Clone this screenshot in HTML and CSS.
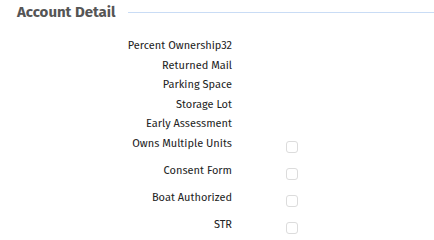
FILE: index.html
```html
<!DOCTYPE html>
<html>
<head>
<meta charset="utf-8">
<link rel="stylesheet" href="styles.css">
</head>
<body>
<section class="panel">
  <div class="panel-head">
    <h2 class="panel-title">Account Detail</h2>
    <span class="panel-rule"></span>
  </div>
  <div class="fields">
    <div class="row"><span class="label">Percent Ownership32</span><span class="value"></span></div>
    <div class="row"><span class="label">Returned Mail</span><span class="value"></span></div>
    <div class="row"><span class="label">Parking Space</span><span class="value"></span></div>
    <div class="row"><span class="label">Storage Lot</span><span class="value"></span></div>
    <div class="row"><span class="label">Early Assessment</span><span class="value"></span></div>
    <div class="row row-check"><span class="label">Owns Multiple Units</span><span class="value"><span class="check"></span></span></div>
    <div class="row row-check"><span class="label">Consent Form</span><span class="value"><span class="check"></span></span></div>
    <div class="row row-check"><span class="label">Boat Authorized</span><span class="value"><span class="check"></span></span></div>
    <div class="row row-check"><span class="label">STR</span><span class="value"><span class="check"></span></span></div>
  </div>
</section>
</body>
</html>
```
FILE: styles.css
```css
html, body {
  margin: 0;
  padding: 0;
  background: #ffffff;
}
body {
  font-family: "Fira Sans", "Lato", "Noto Sans", sans-serif;
  color: #222222;
  width: 434px;
  height: 240px;
  overflow: hidden;
}
.panel-head {
  display: flex;
  align-items: center;
  padding: 2px 0 0 17px;
  height: 20px;
}
.panel-title {
  margin: 0;
  font-size: 15px;
  font-weight: 700;
  color: #555555;
  line-height: 20px;
  white-space: nowrap;
}
.panel-rule {
  flex: 1;
  height: 1px;
  background: #c9dcf5;
  margin-left: 12px;
}
.fields {
  padding-top: 14px;
}
.row {
  display: grid;
  grid-template-columns: 232px 1fr;
  column-gap: 54px;
  height: 19.5px;
  font-size: 11px;
  line-height: 19.5px;
}
.row-check {
  height: 27px;
}
.label {
  text-align: right;
  white-space: nowrap;
}
.check {
  display: block;
  width: 10px;
  height: 10px;
  margin-top: 7px;
  border: 1px solid #dcdcdc;
  border-radius: 3px;
  background: #fff;
}
```
